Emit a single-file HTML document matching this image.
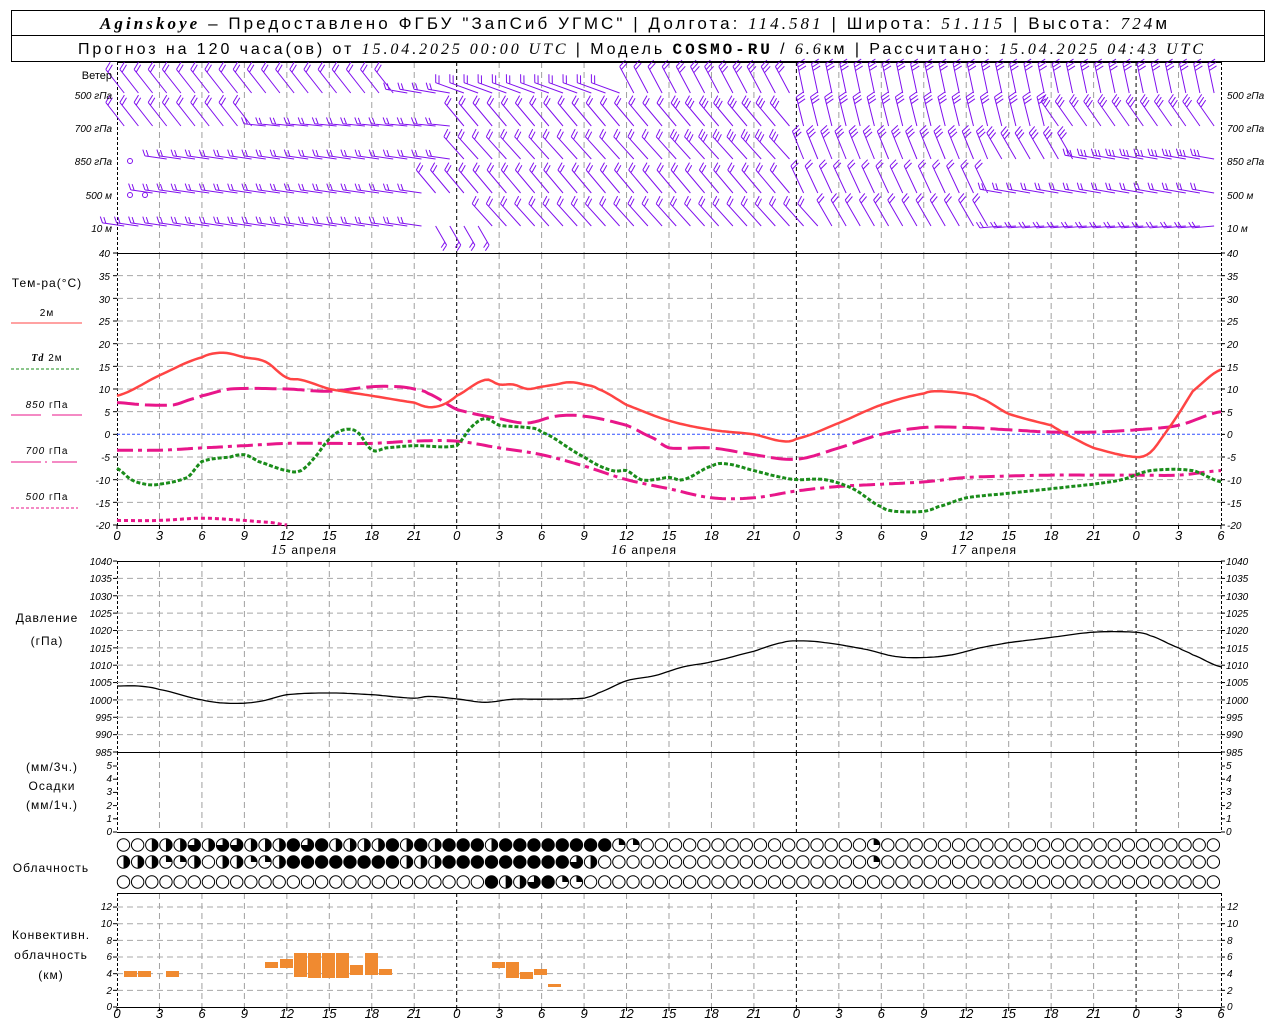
<!DOCTYPE html>
<html><head><meta charset="utf-8">
<style>
html,body{margin:0;padding:0;background:#fff;}
svg{display:block;}
text{font-family:"Liberation Sans","DejaVu Sans",sans-serif;}
.ax{font-size:10px;font-style:italic;fill:#000;}
.tk{font-size:13px;font-style:italic;fill:#000;}
.lb{font-size:12px;fill:#000;letter-spacing:1px;}
.it{font-family:"Liberation Serif",serif;font-style:italic;}
</style></head><body>
<svg id="s" width="1280" height="1024" viewBox="0 0 1280 1024" xmlns="http://www.w3.org/2000/svg">
<rect x="0" y="0" width="1280" height="1024" fill="#fff"/>
<g id="grid"></g>
<g id="data"></g>
<rect x="11.5" y="10.5" width="1253" height="51" fill="none" stroke="#000" stroke-width="1"/>
<line x1="11" y1="35.5" x2="1265" y2="35.5" stroke="#000"/>
<text x="100" y="29" font-size="17" textLength="1067" lengthAdjust="spacing"><tspan class="it" font-weight="bold">Aginskoye</tspan> – Предоставлено ФГБУ "ЗапСиб УГМС" | Долгота: <tspan class="it">114.581</tspan> | Широта: <tspan class="it">51.115</tspan> | Высота: <tspan class="it">724</tspan>м</text>
<text x="78" y="54" font-size="16" textLength="1125" lengthAdjust="spacing">Прогноз на 120 часа(ов) от <tspan class="it">15.04.2025 00:00 UTC</tspan> | Модель <tspan font-family="Liberation Mono" font-weight="bold">COSMO-RU</tspan> / <tspan class="it">6.6</tspan>км | Рассчитано: <tspan class="it">15.04.2025 04:43 UTC</tspan></text>

<g class="ax" text-anchor="end">
<text x="112" y="79" font-style="normal" font-size="11">Ветер</text>
<text x="112" y="99">500 гПа</text><text x="112" y="132">700 гПа</text><text x="112" y="165">850 гПа</text><text x="112" y="199">500 м</text><text x="112" y="232">10 м</text>
</g>
<g class="ax">
<text x="1227" y="99">500 гПа</text><text x="1227" y="132">700 гПа</text><text x="1227" y="165">850 гПа</text><text x="1227" y="199">500 м</text><text x="1227" y="232">10 м</text>
</g>

<g class="ax" text-anchor="end">
<text x="110" y="257">40</text><text x="110" y="280">35</text><text x="110" y="303">30</text><text x="110" y="325">25</text><text x="110" y="348">20</text><text x="110" y="371">15</text><text x="110" y="393">10</text><text x="110" y="416">5</text><text x="110" y="438">0</text><text x="110" y="461">-5</text><text x="110" y="484">-10</text><text x="110" y="507">-15</text><text x="110" y="529">-20</text>
</g>
<g class="ax">
<text x="1227" y="257">40</text><text x="1227" y="280">35</text><text x="1227" y="303">30</text><text x="1227" y="325">25</text><text x="1227" y="348">20</text><text x="1227" y="371">15</text><text x="1227" y="393">10</text><text x="1227" y="416">5</text><text x="1227" y="438">0</text><text x="1227" y="461">-5</text><text x="1227" y="484">-10</text><text x="1227" y="507">-15</text><text x="1227" y="529">-20</text>
</g>
<g class="ax" text-anchor="end" font-size="9">
<text x="112" y="565">1040</text><text x="112" y="582">1035</text><text x="112" y="600">1030</text><text x="112" y="617">1025</text><text x="112" y="634">1020</text><text x="112" y="652">1015</text><text x="112" y="669">1010</text><text x="112" y="686">1005</text><text x="112" y="704">1000</text><text x="112" y="721">995</text><text x="112" y="738">990</text><text x="112" y="756">985</text>
</g>
<g class="ax" font-size="9">
<text x="1226" y="565">1040</text><text x="1226" y="582">1035</text><text x="1226" y="600">1030</text><text x="1226" y="617">1025</text><text x="1226" y="634">1020</text><text x="1226" y="652">1015</text><text x="1226" y="669">1010</text><text x="1226" y="686">1005</text><text x="1226" y="704">1000</text><text x="1226" y="721">995</text><text x="1226" y="738">990</text><text x="1226" y="756">985</text>
</g>
<g class="ax" text-anchor="end" font-size="9">
<text x="112" y="769">5</text><text x="112" y="782">4</text><text x="112" y="795">3</text><text x="112" y="809">2</text><text x="112" y="822">1</text><text x="112" y="835">0</text>
</g>
<g class="ax" font-size="9">
<text x="1226" y="769">5</text><text x="1226" y="782">4</text><text x="1226" y="795">3</text><text x="1226" y="809">2</text><text x="1226" y="822">1</text><text x="1226" y="835">0</text>
</g>
<g class="ax" text-anchor="end">
<text x="112" y="910">12</text><text x="112" y="927">10</text><text x="112" y="944">8</text><text x="112" y="960">6</text><text x="112" y="977">4</text><text x="112" y="994">2</text><text x="112" y="1010">0</text>
</g>
<g class="ax">
<text x="1227" y="910">12</text><text x="1227" y="927">10</text><text x="1227" y="944">8</text><text x="1227" y="960">6</text><text x="1227" y="977">4</text><text x="1227" y="994">2</text><text x="1227" y="1010">0</text>
</g>

<g class="tk" text-anchor="middle">
<text y="540"><tspan x="117">0</tspan><tspan x="159.5">3</tspan><tspan x="202">6</tspan><tspan x="244.4">9</tspan><tspan x="286.8">12</tspan><tspan x="329.3">15</tspan><tspan x="371.8">18</tspan><tspan x="414.2">21</tspan><tspan x="456.7">0</tspan><tspan x="499.2">3</tspan><tspan x="541.6">6</tspan><tspan x="584.1">9</tspan><tspan x="626.5">12</tspan><tspan x="669">15</tspan><tspan x="711.5">18</tspan><tspan x="753.9">21</tspan><tspan x="796.4">0</tspan><tspan x="838.9">3</tspan><tspan x="881.3">6</tspan><tspan x="923.8">9</tspan><tspan x="966.2">12</tspan><tspan x="1008.7">15</tspan><tspan x="1051.2">18</tspan><tspan x="1093.6">21</tspan><tspan x="1136.1">0</tspan><tspan x="1178.6">3</tspan><tspan x="1221">6</tspan></text>
<text y="1018"><tspan x="117">0</tspan><tspan x="159.5">3</tspan><tspan x="202">6</tspan><tspan x="244.4">9</tspan><tspan x="286.8">12</tspan><tspan x="329.3">15</tspan><tspan x="371.8">18</tspan><tspan x="414.2">21</tspan><tspan x="456.7">0</tspan><tspan x="499.2">3</tspan><tspan x="541.6">6</tspan><tspan x="584.1">9</tspan><tspan x="626.5">12</tspan><tspan x="669">15</tspan><tspan x="711.5">18</tspan><tspan x="753.9">21</tspan><tspan x="796.4">0</tspan><tspan x="838.9">3</tspan><tspan x="881.3">6</tspan><tspan x="923.8">9</tspan><tspan x="966.2">12</tspan><tspan x="1008.7">15</tspan><tspan x="1051.2">18</tspan><tspan x="1093.6">21</tspan><tspan x="1136.1">0</tspan><tspan x="1178.6">3</tspan><tspan x="1221">6</tspan></text>
</g>
<g class="lb" text-anchor="middle">
<text x="304" y="554"><tspan class="it" font-size="14">15</tspan> апреля</text>
<text x="644" y="554"><tspan class="it" font-size="14">16</tspan> апреля</text>
<text x="984" y="554"><tspan class="it" font-size="14">17</tspan> апреля</text>
</g>

<g class="lb" text-anchor="middle">
<text x="47" y="287">Тем-ра(°C)</text>
<text x="47" y="316" font-size="10">2м</text>
<text x="47" y="361" font-size="10"><tspan class="it" font-weight="bold">Td</tspan>  2м</text>
<text x="47" y="408" font-size="10"><tspan font-style="italic">850</tspan> гПа</text>
<text x="47" y="454" font-size="10"><tspan font-style="italic">700</tspan> гПа</text>
<text x="47" y="500" font-size="10"><tspan font-style="italic">500</tspan> гПа</text>
<text x="47" y="622">Давление</text>
<text x="47" y="645">(гПа)</text>
<text x="52" y="771">(мм/3ч.)</text>
<text x="52" y="790">Осадки</text>
<text x="52" y="809">(мм/1ч.)</text>
<text x="51" y="872">Облачность</text>
<text x="51" y="939">Конвективн.</text>
<text x="51" y="959">облачность</text>
<text x="51" y="979">(км)</text>
</g>
<line x1="11" y1="323" x2="82" y2="323" stroke="#f44" stroke-width="1"/>
<line x1="11" y1="369" x2="80" y2="369" stroke="#1a8c1a" stroke-dasharray="3 2"/>
<path d="M11 415H41M52 415H82" stroke="#e8168a"/>
<path d="M11 462H41M45 462H47M52 462H77" stroke="#e8168a"/>
<line x1="11" y1="508" x2="78" y2="508" stroke="#e8168a" stroke-dasharray="3 2"/>
</svg>
<script>
(function(){
var NS="http://www.w3.org/2000/svg";
var G=document.getElementById('grid'),D=document.getElementById('data');
function X(h){return 117+h*14.1538;}
function el(p,tag,a){var e=document.createElementNS(NS,tag);for(var k in a)e.setAttribute(k,a[k]);p.appendChild(e);return e;}
var panels=[[62,253],[253,525],[561,752],[752,832],[893,1007]];
panels.forEach(function(p){
 for(var h=0;h<=78;h+=3){
  var day=(h%24==0)&&h>0&&h<78;
  if(h==0){el(G,'line',{x1:117.5,y1:p[0],x2:117.5,y2:p[1],stroke:'#000','stroke-dasharray':'3 2'});continue;}
  if(h==78){el(G,'line',{x1:1221.5,y1:p[0],x2:1221.5,y2:p[1],stroke:'#000','stroke-dasharray':'3 2'});continue;}
  el(G,'line',{x1:X(h),y1:p[0],x2:X(h),y2:p[1],stroke:day?'#000':'#a0a0a0','stroke-dasharray':day?'4 3':'6 4'});
 }
});
function hg(y){el(G,'line',{x1:117,y1:y,x2:1221,y2:y,stroke:'#a8a8a8','stroke-dasharray':'6 4'});}
for(var v=35;v>=-15;v-=5){if(v!=0)hg(253+(40-v)*4.533);}
for(var v=1035;v>=990;v-=5)hg(561+(1040-v)*3.4727);
for(var v=2;v<=12;v+=2)hg(1007-v*8.33);
function ticks(y,step,n){for(var i=0;i<=n;i++){var yy=y-i*step;el(G,'line',{x1:113,y1:yy,x2:117,y2:yy,stroke:'#000'});el(G,'line',{x1:1221,y1:yy,x2:1225,y2:yy,stroke:'#000'});}}
ticks(525,22.665,12);ticks(752,17.36,11);ticks(832,13.2,5);ticks(1007,16.66,6);
[62,253,525,561,752,832,893,1007].forEach(function(y){el(G,'line',{x1:117,y1:y+.5,x2:1221,y2:y+.5,stroke:'#000'});});
for(var h=0;h<=78;h+=3){el(G,'line',{x1:X(h),y1:1007,x2:X(h),y2:1011,stroke:'#000'});el(G,'line',{x1:X(h),y1:525,x2:X(h),y2:529,stroke:'#000'});}
el(G,'line',{x1:117,y1:434.3,x2:1221,y2:434.3,stroke:'#3050ff','stroke-dasharray':'3 2'});
function interp(pts,h){for(var i=0;i<pts.length-1;i++){if(h>=pts[i][0]&&h<=pts[i+1][0]){var t=(h-pts[i][0])/(pts[i+1][0]-pts[i][0]);var a=pts[Math.max(i-1,0)][1],b=pts[i][1],c=pts[i+1][1],d=pts[Math.min(i+2,pts.length-1)][1];var t2=t*t,t3=t2*t;return 0.5*((2*b)+(-a+c)*t+(2*a-5*b+4*c-d)*t2+(-a+3*b-3*c+d)*t3);}}return pts[pts.length-1][1];}
function curve(pts,fy,attrs){var d='',h0=pts[0][0],h1=pts[pts.length-1][0];for(var h=h0;h<=h1+1e-6;h+=0.25){d+=(d?'L':'M')+X(h).toFixed(1)+' '+fy(interp(pts,h)).toFixed(1);}attrs.d=d;attrs.fill='none';el(D,'path',attrs);}
var TY=function(v){return 253+(40-v)*4.533;};
curve([[0,-19],[3,-19],[6,-18.5],[9,-19],[11,-19.5],[12,-20]],TY,{stroke:'#e8168a','stroke-width':3,'stroke-dasharray':'4 3'});
curve([[0,-3.5],[3,-3.5],[6,-3],[9,-2.5],[12,-2],[15,-2],[18,-2],[21,-1.5],[24,-1.5],[27,-3],[30,-4.5],[33,-7],[36,-10],[39,-12],[42,-14],[45,-14],[48,-12.5],[51,-11.5],[54,-11],[57,-10.5],[60,-9.5],[66,-9],[69,-9],[72,-9],[75,-9],[78,-8]],TY,{stroke:'#e8168a','stroke-width':3,'stroke-dasharray':'16 5 4 5'});
curve([[0,7],[2,6.5],[4,6.5],[5,7.5],[6,8.5],[8,10],[12,10],[15,9.5],[18,10.5],[20,10.5],[21,10],[22,9],[24,5.5],[27,3.5],[29,2.5],[31,4],[33,4],[36,2],[38,-1],[39,-3],[42,-3],[45,-4.5],[48,-5.5],[51,-3],[54,0],[57,1.5],[60,1.5],[63,1],[66,0.5],[69,0.5],[72,1],[75,2],[78,5]],TY,{stroke:'#e8168a','stroke-width':3,'stroke-dasharray':'22 6'});
curve([[0,-7.5],[1,-10],[2,-11],[3,-11],[5,-9.5],[6,-6],[8,-5],[9,-4.5],[10,-6],[12,-8],[13,-8],[14,-5],[15,-1],[16,1],[17,0.5],[18,-3.5],[19,-3],[21,-2.5],[24,-2.5],[25,1.5],[26,3.5],[27,2],[29,1.5],[30,0.5],[33,-5],[35,-8],[36,-8],[37,-10],[38,-10],[39,-9.5],[40,-10],[42,-7],[43,-6.5],[45,-8],[47,-9.5],[48,-10],[50,-10],[52,-12],[54,-16],[55,-17],[57,-17],[58,-16],[60,-14],[63,-13],[66,-12],[69,-11],[71,-10],[73,-8],[76,-8],[78,-10.5]],TY,{stroke:'#1a8c1a','stroke-width':3,'stroke-dasharray':'4 2'});
curve([[0,8.5],[3,13],[6,17],[7.5,18],[9,17],[10.5,16],[12,12.5],[13,12],[15,10],[18,8.5],[21,7],[22,6],[23,6.5],[24,8.5],[26,12],[27,11],[28,11],[29,10],[30,10.5],[31,11],[32,11.5],[33,11],[34,10],[36,6.5],[39,3],[42,1],[45,0],[47,-1.5],[48,-1],[51,2.5],[54,6.5],[57,9],[58,9.5],[60,9],[61,8],[63,4.5],[66,2],[67,0],[69,-3],[72,-5],[73,-4],[74,0],[75,4.5],[76,9.5],[78,14.3]],TY,{stroke:'#f44','stroke-width':2.5});
curve([[0,1004],[1.5,1004],[3,1003],[6,1000],[8,999],[10,999.5],[12,1001.5],[15,1002],[18,1001.5],[21,1000.5],[22,1001],[24,1000.3],[26,999.3],[28,1000.2],[30,1000.2],[33,1000.5],[34,1002],[36,1005.5],[38,1007],[40,1009.5],[42,1011],[45,1014],[47,1016.5],[48,1017],[50,1016.5],[53,1014.5],[55,1012.5],[57,1012.2],[59,1013],[61,1015],[63,1016.5],[66,1018],[69,1019.5],[72,1019.5],[73,1018.5],[75,1015],[76,1013],[78,1009.5]],function(v){return 561+(1040-v)*3.4727;},{stroke:'#000','stroke-width':1.3});
var rows=[95,128,161,195,228];
function ang(r,h){
 if(r==0){if(h<20)return 38;if(h<24)return 80;if(h<36)return 70;if(h<48)return 28;return 12;}
 if(r==1){if(h<10)return 38;if(h<24)return 84;if(h<48)return 40;if(h<66)return 14;return 35;}
 if(r==2){if(h<24)return 82;if(h<48)return 42;if(h<62)return 22;if(h<68)return 30;return 80;}
 if(r==3){if(h<22)return 82;if(h<48)return 40;if(h<62)return 25;return 80;}
 if(r==4){if(h<22)return 82;if(h<26)return -150;if(h<50)return 42;if(h<62)return 30;return 95;}
}
var bd='';
for(var r=0;r<5;r++){for(var i=0;i<78;i++){
 if((r==2&&i<3)||(r==3&&i<2)){continue;}
 var h=i+0.3,bx=X(h)+3,by=rows[r]-2;var A=ang(r,h);var a=A*Math.PI/180;var L=(Math.abs(A)>70)?22:30;
 var ux=-Math.sin(a),uy=-Math.cos(a);var tx=bx+L*ux,ty=by+L*uy;
 bd+='M'+bx.toFixed(1)+' '+by.toFixed(1)+'L'+tx.toFixed(1)+' '+ty.toFixed(1);
 var nf=(h>40&&r<3)?3:2;var px=-uy,py=ux;var fl=(Math.abs(A)>70)?6:8;
 for(var f=0;f<nf;f++){var sx=tx-ux*f*3.5,sy=ty-uy*f*3.5;bd+='M'+sx.toFixed(1)+' '+sy.toFixed(1)+'L'+(sx+px*fl+ux*3).toFixed(1)+' '+(sy+py*fl+uy*3).toFixed(1);}
}}
el(D,'path',{d:bd,stroke:'#8010ee','stroke-width':1,fill:'none'});
[[130,161],[130,195],[145,195]].forEach(function(c){el(D,'circle',{cx:c[0],cy:c[1],r:2.5,fill:'none',stroke:'#8010ee'});});
var r1=[0,0,2,2,2,3,2,3,3,2,2,2,4,3,4,2,2,2,2,4,2,4,2,4,4,4,2,4,4,4,4,4,4,4,4,1,1];
var r2=[2,2,2,1,1,2,0,2,2,1,1,2,4,4,4,4,4,4,4,4,2,2,2,4,4,4,4,4,4,4,4,4,3,2];
var r3=[];r3[26]=4;r3[27]=2;r3[28]=2;r3[29]=3;r3[30]=4;r3[31]=1;r3[32]=1;
var cr=[[845,r1],[862,r2],[882,r3]];
cr.forEach(function(row){for(var i=0;i<78;i++){var lv=row[1][i]||0;if(row[0]<880&&i==53)lv=1;var cx=X(i)+6.5,cy=row[0],R=6.2;
 if(lv==4){el(D,'circle',{cx:cx,cy:cy,r:R,fill:'#000',stroke:'#000'});continue;}
 el(D,'circle',{cx:cx,cy:cy,r:R,fill:'#fff',stroke:'#000'});
 if(lv==2)el(D,'path',{d:'M'+cx+' '+(cy-R)+'A'+R+' '+R+' 0 0 1 '+cx+' '+(cy+R)+'Z',fill:'#000'});
 if(lv==1)el(D,'path',{d:'M'+cx+' '+cy+'L'+cx+' '+(cy-R)+'A'+R+' '+R+' 0 0 1 '+(cx+R)+' '+cy+'Z',fill:'#000'});
 if(lv==3)el(D,'path',{d:'M'+cx+' '+cy+'L'+cx+' '+(cy-R)+'A'+R+' '+R+' 0 1 1 '+(cx-R)+' '+cy+'Z',fill:'#000'});
}});
[[124,971,14,6],[138,971,14,6],[166,971,14,6],[265,962,14,6],[280,959,14,9],[294,953,14,24],[308,953,14,25],[322,953,14,25],[336,953,14,25],[350,965,14,10],[365,953,14,22],[379,969,14,6],[492,962,14,6],[506,962,14,16],[520,972,14,7],[534,969,14,6],[548,984,14,3]].forEach(function(b){el(D,'rect',{x:b[0],y:b[1],width:b[2]-1,height:b[3],fill:'#f08a30'});});
})();
</script>
</body></html>
